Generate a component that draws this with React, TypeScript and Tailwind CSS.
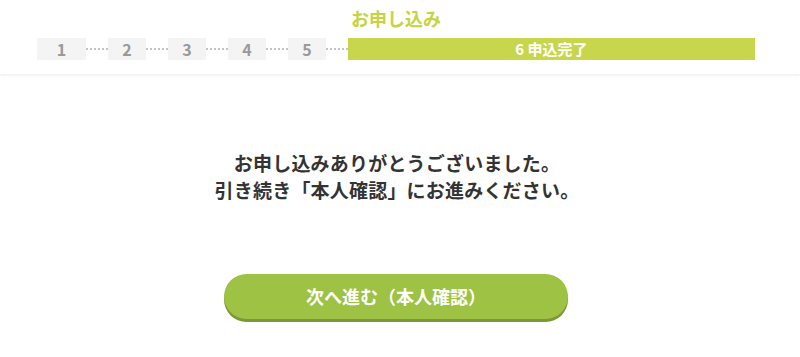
const font = { fontFamily: '"Noto Sans CJK JP", "Noto Sans", sans-serif' }

const steps = [
  { n: '1', w: 'w-[49px]' },
  { n: '2', w: 'w-[38px]' },
  { n: '3', w: 'w-[38px]' },
  { n: '4', w: 'w-[38px]' },
  { n: '5', w: 'w-[38px]' },
]

function Dots() {
  return <div className="w-[22px] h-0 border-t-2 border-dotted border-[#c4c4c4]" />
}

export default function App() {
  return (
    <div className="w-[800px] h-[357px] bg-white overflow-hidden" style={font}>
      <header className="pt-[5px] pb-[14px] shadow-[0_2px_2px_#f3f3f3]">
        <h1 className="pr-[8px] text-center text-[18px] leading-[26px] font-bold text-[#c5d443]">お申し込み</h1>
        <div className="mt-[7px] ml-[37px] flex items-center h-[22px]">
          {steps.map((s) => (
            <div key={s.n} className="flex items-center h-full">
              <div className={`${s.w} h-full bg-[#f4f4f4] flex items-center justify-center text-[16px] font-bold text-[#999]`}>
                {s.n}
              </div>
              <Dots />
            </div>
          ))}
          <div className="w-[407px] h-full bg-[#c8d64b] flex items-center justify-center text-[15px] font-bold text-white">
            6 申込完了
          </div>
        </div>
      </header>
      <main className="pr-[6px] flex flex-col items-center">
        <p className="mt-[75px] text-center text-[19px] leading-[27px] tracking-[0.2px] font-bold text-[#333]">
          お申し込みありがとうございました。
          <br />
          引き続き「本人確認」にお進みください。
        </p>
        <button className="mt-[71px] mr-[2px] w-[344px] h-[45px] rounded-full bg-[#9dc244] shadow-[0_3px_0_#7b9834] text-white text-[18px] font-bold">
          次へ進む（本人確認）
        </button>
      </main>
    </div>
  )
}
